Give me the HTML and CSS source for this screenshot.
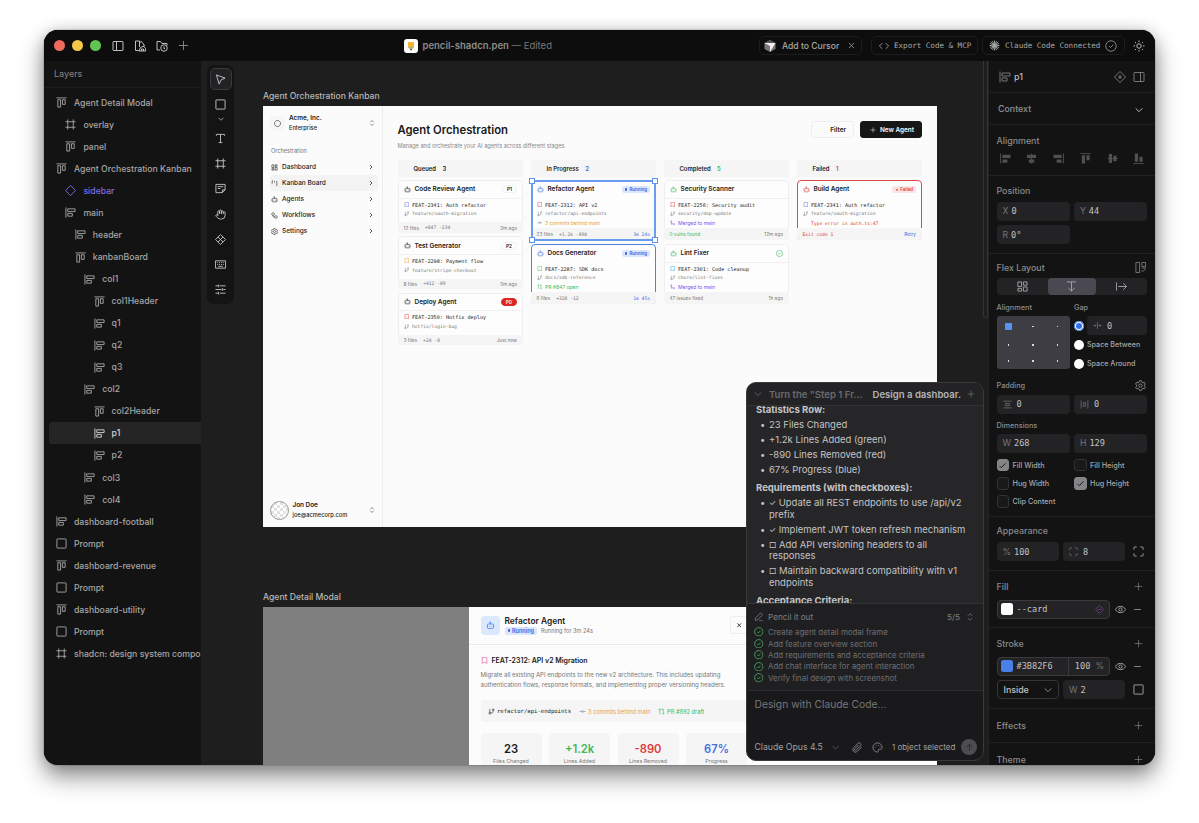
FILE: index.html
```html
<!DOCTYPE html>
<html lang="en">
<head>
  <meta charset="UTF-8" />
  <meta name="viewport" content="width=device-width, initial-scale=1" />
  <title>pencil-shadcn.pen</title>
  <link rel="stylesheet" href="styles.css">
</head>
<body>

  <!-- icon sprite -->
  <svg class="sprite">
    <symbol id="i-col" viewBox="0 0 24 24"><path d="M2 1v22M6 4h16v6H6zM6 14h10v6H6z"/></symbol>
    <symbol id="i-row" viewBox="0 0 24 24"><path d="M1 2h22M4 6h6v16H4zM14 6h6v10h-6z"/></symbol>
    <symbol id="i-frame" viewBox="0 0 24 24"><path d="M1 6h22M1 18h22M6 1v22M18 1v22"/></symbol>
    <symbol id="i-square" viewBox="0 0 24 24"><rect x="2" y="2" width="20" height="20" rx="1"/></symbol>
    <symbol id="i-diamond" viewBox="0 0 24 24"><path d="M12 1l11 11-11 11L1 12z"/></symbol>
    <symbol id="i-left" viewBox="0 0 24 24"><rect x="2" y="3" width="20" height="18" rx="1"/><path d="M9 3v18"/></symbol>
    <symbol id="i-right" viewBox="0 0 24 24"><rect x="2" y="3" width="20" height="18" rx="1"/><path d="M15 3v18"/></symbol>
    <symbol id="i-swatch" viewBox="0 0 24 24"><path d="M10 21H3V2h8v12M11 5l4-2 6 8-3 2M11 21l1-5 7-4 4 5v5H10M15 22v-4h4v4"/></symbol>
    <symbol id="i-folder" viewBox="0 0 24 24"><path d="M8 20H2V3h7l3 4h10v4"/><circle cx="16" cy="16" r="6.500"/><path d="M16 13v4h2"/></symbol>
    <symbol id="i-plus" viewBox="0 0 24 24"><path d="M12 2v20M2 12h20"/></symbol>
    <symbol id="i-minus" viewBox="0 0 24 24"><path d="M3 12h18"/></symbol>
    <symbol id="i-x" viewBox="0 0 24 24"><path d="M5 5l14 14M19 5L5 19"/></symbol>
    <symbol id="i-code" viewBox="0 0 24 24"><path d="M8 5l-7 7 7 7M16 5l7 7-7 7"/></symbol>
    <symbol id="i-burst" viewBox="0 0 24 24"><path d="M12 1v22M1 12h22M4 4l16 16M20 4L4 20M7.500 2l9 20M16.500 2l-9 20M2 7.500l20 9M22 7.500l-20 9"/></symbol>
    <symbol id="i-check" viewBox="0 0 24 24"><circle cx="12" cy="12" r="10.500"/><path d="M8 12l3 3 5.500-5.500"/></symbol>
    <symbol id="i-tick" viewBox="0 0 24 24"><path d="M4 13l5 5L20 6"/></symbol>
    <symbol id="i-sun" viewBox="0 0 24 24"><circle cx="12" cy="12" r="4.500"/><path d="M12 1v3M12 20v3M1 12h3M20 12h3M4 4l2 2M18 18l2 2M4 20l2-2M18 6l2-2"/></symbol>
    <symbol id="i-cursor" viewBox="0 0 24 24"><path d="M3 2l6 20 4-9 9-4z"/></symbol>
    <symbol id="i-down" viewBox="0 0 24 24"><path d="M2 7l10 10L22 7"/></symbol>
    <symbol id="i-next" viewBox="0 0 24 24"><path d="M8 4l8 8-8 8"/></symbol>
    <symbol id="i-updown" viewBox="0 0 24 24"><path d="M5 9l7-7 7 7M5 15l7 7 7-7"/></symbol>
    <symbol id="i-text" viewBox="0 0 24 24"><path d="M3 6V3h18v3M12 3v18M8 21h8"/></symbol>
    <symbol id="i-note" viewBox="0 0 24 24"><path d="M2 3h20v12l-6 6H2zM22 15h-6v6M6 8h12M6 12h6"/></symbol>
    <symbol id="i-hand" viewBox="0 0 24 24"><path d="M18 11V6a2 2 0 0 0-4 0v5M14 10V4a2 2 0 0 0-4 0v6M10 10.500V6a2 2 0 0 0-4 0v8M18 8a2 2 0 0 1 4 0v6a8 8 0 0 1-8 8h-2c-3 0-4.500-1-6-2.500L2.500 16a2 2 0 0 1 3-3L7 15"/></symbol>
    <symbol id="i-comp" viewBox="0 0 24 24"><path d="M12 1l11 11-11 11L1 12zM6.500 6.500l11 11M17.500 6.500l-11 11"/></symbol>
    <symbol id="i-dplus" viewBox="0 0 24 24"><path d="M12 1l11 11-11 11L1 12zM12 8v8M8 12h8"/></symbol>
    <symbol id="i-dminus" viewBox="0 0 24 24"><path d="M12 1l11 11-11 11L1 12zM7 12h10"/></symbol>
    <symbol id="i-keys" viewBox="0 0 24 24"><path d="M1 4h22v16H1zM5 8h2M9 8h2M13 8h2M17 8h2M5 12h2M9 12h2M13 12h2M17 12h2M7 16h10"/></symbol>
    <symbol id="i-sliders" viewBox="0 0 24 24"><path d="M1 4h6M11 4h12M8 1v6M1 12h13M18 12h5M16 9v6M1 20h6M11 20h12M8 17v6"/></symbol>
    <symbol id="i-dash" viewBox="0 0 24 24"><path d="M3 3h7v9H3zM14 3h7v5h-7zM14 12h7v9h-7zM3 16h7v5H3z"/></symbol>
    <symbol id="i-grid" viewBox="0 0 24 24"><path d="M2 2h8v10H2zM14 2h8v7h-8zM14 13h8v9h-8zM2 16h8v6H2z"/></symbol>
    <symbol id="i-kanban" viewBox="0 0 24 24"><path d="M4 3v10M12 3v6M20 3v18M4 3h3"/></symbol>
    <symbol id="i-bot" viewBox="0 0 24 24"><path d="M12 8V3H8M2 14h2M20 14h2M15 13v2M9 13v2"/><rect x="4" y="8" width="16" height="12" rx="2"/></symbol>
    <symbol id="i-flow" viewBox="0 0 24 24"><rect x="3" y="3" width="8" height="8" rx="2"/><path d="M7 11v4a2 2 0 0 0 2 2h4"/><rect x="13" y="13" width="8" height="8" rx="2"/></symbol>
    <symbol id="i-gear" viewBox="0 0 24 24"><path d="M10 1.500h4l1 3 2.500 1.500 3.200-.7 2 3.500L20.500 11v2.500l2.200 2-2 3.500-3.200-.7L15 20l-1 2.800h-4L9 20l-2.500-1.500-3.200.7-2-3.500 2.200-2V11L1.300 8.800l2-3.500 3.200.7L9 4.500z"/><circle cx="12" cy="12.200" r="3.600"/></symbol>
    <symbol id="i-branch" viewBox="0 0 24 24"><path d="M6 3v13M18 9a9 9 0 0 1-9 9"/><circle cx="18" cy="6" r="3"/><circle cx="6" cy="18" r="3"/></symbol>
    <symbol id="i-mark" viewBox="0 0 24 24"><path d="M20 22l-8-5-8 5V2h16z"/></symbol>
    <symbol id="i-commit" viewBox="0 0 24 24"><circle cx="12" cy="12" r="3"/><path d="M2 12h7M15 12h7"/></symbol>
    <symbol id="i-pr" viewBox="0 0 24 24"><circle cx="18" cy="19" r="2.500"/><circle cx="6" cy="5" r="2.500"/><path d="M6 8v14M18 16V5h-5l3-3M13 5l3 3"/></symbol>
    <symbol id="i-merge" viewBox="0 0 24 24"><circle cx="18" cy="18" r="3"/><circle cx="6" cy="6" r="3"/><path d="M6 21V9a9 9 0 0 0 9 9"/></symbol>
    <symbol id="i-hex" viewBox="0 0 24 24"><path d="M8 2h8l6 6v8l-6 6H8l-6-6V8z"/></symbol>
    <symbol id="i-pencil" viewBox="0 0 24 24"><path d="M3 21l1-6L17 2l5 5L9 20zM13 22h9"/></symbol>
    <symbol id="i-clip" viewBox="0 0 24 24"><path d="M21 11l-9.500 9.500a5.500 5.500 0 0 1-8-8L13 3a3.700 3.700 0 0 1 5.500 5.500L9 18a2 2 0 0 1-3-3l8.500-8.500"/></symbol>
    <symbol id="i-palette" viewBox="0 0 24 24"><path d="M12 2a10 10 0 1 0 0 20c2 0 2.500-1.500 1.700-2.700-1-1.700 0-3.300 2-3.300H19c2 0 3-1.500 3-4 0-5.500-4.500-10-10-10z"/><path d="M6 12h1.500M8.500 7.500H10M14 7.500h1.500M17 11h1.500"/></symbol>
    <symbol id="i-up" viewBox="0 0 24 24"><path d="M12 21V3M4 11l8-8 8 8"/></symbol>
    <symbol id="i-eye" viewBox="0 0 24 24"><path d="M1 12c4-9 18-9 22 0-4 9-18 9-22 0z"/><circle cx="12" cy="12" r="3.500"/></symbol>
    <symbol id="i-corners" viewBox="0 0 24 24"><path d="M2 8V4a2 2 0 0 1 2-2h4M16 2h4a2 2 0 0 1 2 2v4M22 16v4a2 2 0 0 1-2 2h-4M8 22H4a2 2 0 0 1-2-2v-4"/></symbol>
    <symbol id="i-fromtop" viewBox="0 0 24 24"><path d="M2 2h20M12 2v20M5 15l7 7 7-7"/></symbol>
    <symbol id="i-fromleft" viewBox="0 0 24 24"><path d="M1 3v18M5 12h18M16 5l7 7-7 7"/></symbol>
    <symbol id="i-gap" viewBox="0 0 24 24"><path d="M12 3v18M1 12h7M16 12h7M5 9l3 3-3 3M19 9l-3 3 3 3"/></symbol>
    <symbol id="i-padv" viewBox="0 0 24 24"><path d="M1 3h22M1 21h22M7 9h10v6H7z"/></symbol>
    <symbol id="i-padh" viewBox="0 0 24 24"><path d="M3 1v22M21 1v22M9 7h6v10H9z"/></symbol>
    <symbol id="i-layout" viewBox="0 0 24 24"><path d="M2 1h8v22H2zM15 1h8v9h-8zM14 18l3 3 6-6v-2h-8"/></symbol>
    <symbol id="a-left" viewBox="0 0 24 24"><path d="M1 1v22"/><path class="solid" d="M5 4h18v7H5zM5 14h11v7H5z"/></symbol>
    <symbol id="a-center" viewBox="0 0 24 24"><path d="M12 1v22"/><path class="solid" d="M2 4h20v7H2zM6 14h12v7H6z"/></symbol>
    <symbol id="a-right" viewBox="0 0 24 24"><path d="M23 1v22"/><path class="solid" d="M1 4h18v7H1zM8 14h11v7H8z"/></symbol>
    <symbol id="a-top" viewBox="0 0 24 24"><path d="M1 1h22"/><path class="solid" d="M4 5h7v18H4zM14 5h7v11h-7z"/></symbol>
    <symbol id="a-middle" viewBox="0 0 24 24"><path d="M1 12h22"/><path class="solid" d="M4 2h7v20H4zM14 6h7v12h-7z"/></symbol>
    <symbol id="a-bottom" viewBox="0 0 24 24"><path d="M1 23h22"/><path class="solid" d="M4 1h7v18H4zM14 8h7v11h-7z"/></symbol>
  </svg>

  <div class="window">

    <header class="titlebar">
      <div class="tb-left">
        <span class="light red"></span>
        <span class="light yellow"></span>
        <span class="light green"></span>
        <svg class="icon"><use href="#i-left"/></svg>
        <svg class="icon"><use href="#i-swatch"/></svg>
        <svg class="icon"><use href="#i-folder"/></svg>
        <svg class="icon"><use href="#i-plus"/></svg>
      </div>
      <div class="tb-title">
        <svg class="app-icon" viewBox="0 0 14 14"><rect width="14" height="14" rx="3" fill="#fff"/><path d="M4 3h6v5l-3 3.500L4 8z" fill="#f2b632"/><path d="M4 8h6l-3 3.500z" fill="#b9a98c"/><path d="M6 10.300h2l-1 1.200z" fill="#222"/></svg>
        <span><b>pencil-shadcn.pen</b> — Edited</span>
      </div>
      <div class="tb-right">
        <div class="chip cursor-chip">
          <svg class="cube" viewBox="0 0 12 13"><path d="M6 0l6 3.200v6.600L6 13 0 9.800V3.200z" fill="#777"/><path d="M0 3.200h12L6 13V6.500z" fill="#eee"/><path d="M0 3.200L6 0l6 3.200z" fill="#555"/></svg>
          <span>Add to Cursor</span>
          <svg class="icon"><use href="#i-x"/></svg>
        </div>
        <div class="chip mono export-chip">
          <svg class="icon"><use href="#i-code"/></svg>
          <span>Export Code &amp; MCP</span>
        </div>
        <div class="chip mono claude-chip">
          <svg class="icon"><use href="#i-burst"/></svg>
          <span>Claude Code Connected</span>
          <svg class="icon"><use href="#i-check"/></svg>
        </div>
        <svg class="icon sun"><use href="#i-sun"/></svg>
      </div>
    </header>

    <div class="workspace">

      <aside class="layers">
        <div class="layers-head">Layers</div>
        <ul class="tree">
          <li><svg class="icon"><use href="#i-row"/></svg>Agent Detail Modal</li>
          <li class="l1"><svg class="icon"><use href="#i-frame"/></svg>overlay</li>
          <li class="l1"><svg class="icon"><use href="#i-row"/></svg>panel</li>
          <li><svg class="icon"><use href="#i-row"/></svg>Agent Orchestration Kanban</li>
          <li class="l1 component"><svg class="icon"><use href="#i-diamond"/></svg>sidebar</li>
          <li class="l1"><svg class="icon"><use href="#i-col"/></svg>main</li>
          <li class="l2"><svg class="icon"><use href="#i-col"/></svg>header</li>
          <li class="l2"><svg class="icon"><use href="#i-row"/></svg>kanbanBoard</li>
          <li class="l3"><svg class="icon"><use href="#i-col"/></svg>col1</li>
          <li class="l4"><svg class="icon"><use href="#i-row"/></svg>col1Header</li>
          <li class="l4"><svg class="icon"><use href="#i-col"/></svg>q1</li>
          <li class="l4"><svg class="icon"><use href="#i-col"/></svg>q2</li>
          <li class="l4"><svg class="icon"><use href="#i-col"/></svg>q3</li>
          <li class="l3"><svg class="icon"><use href="#i-col"/></svg>col2</li>
          <li class="l4"><svg class="icon"><use href="#i-row"/></svg>col2Header</li>
          <li class="l4 selected"><svg class="icon"><use href="#i-col"/></svg>p1</li>
          <li class="l4"><svg class="icon"><use href="#i-col"/></svg>p2</li>
          <li class="l3"><svg class="icon"><use href="#i-col"/></svg>col3</li>
          <li class="l3"><svg class="icon"><use href="#i-col"/></svg>col4</li>
          <li><svg class="icon"><use href="#i-col"/></svg>dashboard-football</li>
          <li><svg class="icon"><use href="#i-square"/></svg>Prompt</li>
          <li><svg class="icon"><use href="#i-row"/></svg>dashboard-revenue</li>
          <li><svg class="icon"><use href="#i-square"/></svg>Prompt</li>
          <li><svg class="icon"><use href="#i-row"/></svg>dashboard-utility</li>
          <li><svg class="icon"><use href="#i-square"/></svg>Prompt</li>
          <li><svg class="icon"><use href="#i-frame"/></svg>shadcn: design system compo</li>
        </ul>
      </aside>

      <main class="canvas">

        <div class="tools">
          <span class="tool active"><svg class="icon"><use href="#i-cursor"/></svg></span>
          <span class="tool"><svg class="icon"><use href="#i-square"/></svg></span>
          <span class="tool more"><svg class="icon"><use href="#i-down"/></svg></span>
          <span class="tool"><svg class="icon"><use href="#i-text"/></svg></span>
          <span class="tool"><svg class="icon"><use href="#i-frame"/></svg></span>
          <span class="tool"><svg class="icon"><use href="#i-note"/></svg></span>
          <span class="tool"><svg class="icon"><use href="#i-hand"/></svg></span>
          <span class="tool"><svg class="icon"><use href="#i-comp"/></svg></span>
          <span class="tool"><svg class="icon"><use href="#i-keys"/></svg></span>
          <span class="tool"><svg class="icon"><use href="#i-sliders"/></svg></span>
        </div>

        <!-- kanban artboard -->
        <div class="board-wrap kanban-pos">
          <div class="board-name">Agent Orchestration Kanban</div>
          <div class="artboard kanban">
            <div class="app-side">
              <div class="team">
                <span class="team-logo"><svg class="icon"><use href="#i-hex"/></svg></span>
                <span class="who"><b>Acme, Inc.</b><small>Enterprise</small></span>
                <svg class="icon ud"><use href="#i-updown"/></svg>
              </div>
              <div class="nav-title">Orchestration</div>
              <div class="nav">
                <div><svg class="icon"><use href="#i-dash"/></svg>Dashboard<svg class="icon go"><use href="#i-next"/></svg></div>
                <div class="on"><svg class="icon"><use href="#i-kanban"/></svg>Kanban Board<svg class="icon go"><use href="#i-next"/></svg></div>
                <div><svg class="icon"><use href="#i-bot"/></svg>Agents<svg class="icon go"><use href="#i-next"/></svg></div>
                <div><svg class="icon"><use href="#i-flow"/></svg>Workflows<svg class="icon go"><use href="#i-next"/></svg></div>
                <div><svg class="icon"><use href="#i-gear"/></svg>Settings<svg class="icon go"><use href="#i-next"/></svg></div>
              </div>
              <div class="team user">
                <span class="avatar"></span>
                <span class="who"><b>Jon Doe</b><small>joe@acmecorp.com</small></span>
                <svg class="icon ud"><use href="#i-updown"/></svg>
              </div>
            </div>
            <div class="app-main">
              <div class="app-head">
                <div>
                  <h1>Agent Orchestration</h1>
                  <p>Manage and orchestrate your AI agents across different stages</p>
                </div>
                <span class="btn">Filter</span>
                <span class="btn dark"><svg class="icon"><use href="#i-plus"/></svg>New Agent</span>
              </div>
              <div class="columns">

                <div class="column">
                  <div class="col-head">Queued <span>3</span></div>
                  <div class="card">
                    <div class="card-head"><svg class="icon"><use href="#i-bot"/></svg>Code Review Agent<span class="tag">P1</span></div>
                    <div class="card-body">
                      <div class="feat"><svg class="icon indigo"><use href="#i-mark"/></svg>FEAT-2341: Auth refactor</div>
                      <div class="br"><svg class="icon"><use href="#i-branch"/></svg>feature/oauth-migration</div>
                    </div>
                    <div class="card-foot">12 files<i>+847 -234</i><span>2m ago</span></div>
                  </div>
                  <div class="card">
                    <div class="card-head"><svg class="icon"><use href="#i-bot"/></svg>Test Generator<span class="tag">P2</span></div>
                    <div class="card-body">
                      <div class="feat"><svg class="icon orange"><use href="#i-mark"/></svg>FEAT-2298: Payment flow</div>
                      <div class="br"><svg class="icon"><use href="#i-branch"/></svg>feature/stripe-checkout</div>
                    </div>
                    <div class="card-foot">8 files<i>+412 -89</i><span>5m ago</span></div>
                  </div>
                  <div class="card">
                    <div class="card-head"><svg class="icon"><use href="#i-bot"/></svg>Deploy Agent<span class="tag p0">P0</span></div>
                    <div class="card-body">
                      <div class="feat"><svg class="icon red-c"><use href="#i-mark"/></svg>FEAT-2350: Hotfix deploy</div>
                      <div class="br"><svg class="icon"><use href="#i-branch"/></svg>hotfix/login-bug</div>
                    </div>
                    <div class="card-foot">3 files<i>+24 -8</i><span>Just now</span></div>
                  </div>
                </div>

                <div class="column">
                  <div class="col-head">In Progress <span class="blue-c">2</span></div>
                  <div class="card tall running">
                    <div class="card-head"><svg class="icon blue-c"><use href="#i-bot"/></svg>Refactor Agent<span class="status">Running</span></div>
                    <div class="card-body">
                      <div class="feat"><svg class="icon red-c"><use href="#i-mark"/></svg>FEAT-2312: API v2</div>
                      <div class="br"><svg class="icon"><use href="#i-branch"/></svg>refactor/api-endpoints</div>
                      <div class="note orange"><svg class="icon grey-c"><use href="#i-commit"/></svg>3 commits behind main</div>
                    </div>
                    <div class="card-foot">23 files<i>+1.2k -890</i><span class="mono blue-c">3m 24s</span></div>
                    <div class="selection"><i></i><i></i><i></i><i></i></div>
                  </div>
                  <div class="card tall running">
                    <div class="card-head"><svg class="icon blue-c"><use href="#i-bot"/></svg>Docs Generator<span class="status">Running</span></div>
                    <div class="card-body">
                      <div class="feat"><svg class="icon green-c"><use href="#i-mark"/></svg>FEAT-2287: SDK docs</div>
                      <div class="br"><svg class="icon"><use href="#i-branch"/></svg>docs/sdk-reference</div>
                      <div class="note green-c"><svg class="icon"><use href="#i-pr"/></svg>PR #847 open</div>
                    </div>
                    <div class="card-foot">6 files<i>+328 -12</i><span class="mono blue-c">1m 45s</span></div>
                  </div>
                </div>

                <div class="column">
                  <div class="col-head">Completed <span class="green-c">5</span></div>
                  <div class="card tall">
                    <div class="card-head"><svg class="icon green-c"><use href="#i-bot"/></svg>Security Scanner</div>
                    <div class="card-body">
                      <div class="feat"><svg class="icon red-c"><use href="#i-mark"/></svg>FEAT-2256: Security audit</div>
                      <div class="br"><svg class="icon"><use href="#i-branch"/></svg>security/dep-update</div>
                      <div class="note violet"><svg class="icon"><use href="#i-merge"/></svg>Merged to main</div>
                    </div>
                    <div class="card-foot"><em class="green-c">0 vulns found</em><span>12m ago</span></div>
                  </div>
                  <div class="card tall">
                    <div class="card-head"><svg class="icon green-c"><use href="#i-bot"/></svg>Lint Fixer<svg class="icon done green-c"><use href="#i-check"/></svg></div>
                    <div class="card-body">
                      <div class="feat"><svg class="icon cyan"><use href="#i-mark"/></svg>FEAT-2301: Code cleanup</div>
                      <div class="br"><svg class="icon"><use href="#i-branch"/></svg>chore/lint-fixes</div>
                      <div class="note violet"><svg class="icon"><use href="#i-merge"/></svg>Merged to main</div>
                    </div>
                    <div class="card-foot">47 issues fixed<span>1h ago</span></div>
                  </div>
                </div>

                <div class="column">
                  <div class="col-head">Failed <span class="red-c">1</span></div>
                  <div class="card tall failed">
                    <div class="card-head"><svg class="icon red-c"><use href="#i-bot"/></svg>Build Agent<span class="status bad">Failed</span></div>
                    <div class="card-body">
                      <div class="feat"><svg class="icon indigo"><use href="#i-mark"/></svg>FEAT-2341: Auth refactor</div>
                      <div class="br"><svg class="icon"><use href="#i-branch"/></svg>feature/oauth-migration</div>
                      <div class="br err">Type error in auth.ts:47</div>
                    </div>
                    <div class="card-foot"><em class="mono red-c">Exit code 1</em><span class="blue-c">Retry</span></div>
                  </div>
                </div>

              </div>
            </div>
          </div>
        </div>

        <!-- modal artboard -->
        <div class="board-wrap modal-pos">
          <div class="board-name">Agent Detail Modal</div>
          <div class="artboard modal">
            <div class="sheet">
              <div class="sheet-head">
                <span class="bot-box"><svg class="icon"><use href="#i-bot"/></svg></span>
                <div>
                  <h2>Refactor Agent</h2>
                  <div class="run"><span class="status">Running</span>Running for 3m 24s</div>
                </div>
                <span class="close"><svg class="icon"><use href="#i-x"/></svg></span>
              </div>
              <div class="sheet-body">
                <h3><svg class="icon"><use href="#i-mark"/></svg>FEAT-2312: API v2 Migration</h3>
                <p>Migrate all existing API endpoints to the new v2 architecture. This includes updating<br>authentication flows, response formats, and implementing proper versioning headers.</p>
                <div class="branch-bar">
                  <svg class="icon"><use href="#i-branch"/></svg><code>refactor/api-endpoints</code>
                  <svg class="icon grey-c"><use href="#i-commit"/></svg><span class="orange behind">3 commits behind main</span>
                  <svg class="icon green-c"><use href="#i-pr"/></svg><span class="green-c">PR #892 draft</span>
                </div>
                <div class="stats">
                  <div><b>23</b>Files Changed</div>
                  <div><b class="green-c">+1.2k</b>Lines Added</div>
                  <div><b class="red-c">-890</b>Lines Removed</div>
                  <div><b class="blue-c">67%</b>Progress</div>
                </div>
              </div>
            </div>
          </div>
        </div>

        <!-- chat -->
        <div class="chat">
          <div class="chat-tabs">
            <svg class="icon"><use href="#i-down"/></svg>
            <span>Turn the "Step 1 Fr...</span>
            <b>Design a dashboar.</b>
            <svg class="icon"><use href="#i-plus"/></svg>
          </div>
          <div class="chat-log">
            <h4>Statistics Row:</h4>
            <ul>
              <li>23 Files Changed</li>
              <li>+1.2k Lines Added (green)</li>
              <li>-890 Lines Removed (red)</li>
              <li>67% Progress (blue)</li>
            </ul>
            <h4>Requirements (with checkboxes):</h4>
            <ul>
              <li><i>✓</i> Update all REST endpoints to use /api/v2<br>prefix</li>
              <li><i>✓</i> Implement JWT token refresh mechanism</li>
              <li><i>□</i> Add API versioning headers to all<br>responses</li>
              <li><i>□</i> Maintain backward compatibility with v1<br>endpoints</li>
            </ul>
            <h4>Acceptance Criteria:</h4>
          </div>
          <div class="todo">
            <div class="todo-head"><svg class="icon"><use href="#i-pencil"/></svg>Pencil it out<span>5/5</span><svg class="icon"><use href="#i-updown"/></svg></div>
            <div class="todo-item"><svg class="icon"><use href="#i-check"/></svg>Create agent detail modal frame</div>
            <div class="todo-item"><svg class="icon"><use href="#i-check"/></svg>Add feature overview section</div>
            <div class="todo-item"><svg class="icon"><use href="#i-check"/></svg>Add requirements and acceptance criteria</div>
            <div class="todo-item"><svg class="icon"><use href="#i-check"/></svg>Add chat interface for agent interaction</div>
            <div class="todo-item"><svg class="icon"><use href="#i-check"/></svg>Verify final design with screenshot</div>
          </div>
          <div class="prompt">
            <div class="placeholder">Design with Claude Code...</div>
            <div class="prompt-bar">
              <span class="model">Claude Opus 4.5</span>
              <svg class="icon caret"><use href="#i-down"/></svg>
              <svg class="icon"><use href="#i-clip"/></svg>
              <svg class="icon"><use href="#i-palette"/></svg>
              <span class="count">1 object selected</span>
              <span class="send"><svg class="icon"><use href="#i-up"/></svg></span>
            </div>
          </div>
        </div>

        <div class="scrollbar"></div>
      </main>

      <aside class="props">
        <section class="s-name">
          <svg class="icon"><use href="#i-col"/></svg><b>p1</b>
          <svg class="icon push"><use href="#i-dplus"/></svg>
          <svg class="icon"><use href="#i-right"/></svg>
        </section>
        <section class="s-context">
          <span>Context</span><svg class="icon push"><use href="#i-down"/></svg>
        </section>
        <section class="s-align">
          <h5>Alignment</h5>
          <div class="align-row">
            <svg class="icon"><use href="#a-left"/></svg>
            <svg class="icon"><use href="#a-center"/></svg>
            <svg class="icon"><use href="#a-right"/></svg>
            <svg class="icon"><use href="#a-top"/></svg>
            <svg class="icon"><use href="#a-middle"/></svg>
            <svg class="icon"><use href="#a-bottom"/></svg>
          </div>
        </section>
        <section class="s-position">
          <h5>Position</h5>
          <div class="pair">
            <div class="field"><i>X</i>0</div>
            <div class="field"><i>Y</i>44</div>
            <div class="field"><i>R</i>0°</div>
          </div>
        </section>
        <section class="s-flex">
          <h5>Flex Layout <svg class="icon push"><use href="#i-layout"/></svg></h5>
          <div class="segments">
            <span><svg class="icon"><use href="#i-grid"/></svg></span>
            <span class="on"><svg class="icon"><use href="#i-fromtop"/></svg></span>
            <span><svg class="icon"><use href="#i-fromleft"/></svg></span>
          </div>
          <div class="pair labels"><h6>Alignment</h6><h6>Gap</h6></div>
          <div class="pair">
            <div class="nine"><i class="on"></i><i></i><i></i><i></i><i></i><i></i><i></i><i></i><i></i></div>
            <div class="gaps">
              <div><span class="radio on"></span><span class="field"><svg class="icon"><use href="#i-gap"/></svg>0</span></div>
              <div><span class="radio"></span>Space Between</div>
              <div><span class="radio"></span>Space Around</div>
            </div>
          </div>
          <h6 class="padding-label">Padding <svg class="icon push"><use href="#i-gear"/></svg></h6>
          <div class="pair">
            <div class="field"><svg class="icon"><use href="#i-padv"/></svg>0</div>
            <div class="field"><svg class="icon"><use href="#i-padh"/></svg>0</div>
          </div>
          <h6 class="dim-label">Dimensions</h6>
          <div class="pair">
            <div class="field"><i>W</i>268</div>
            <div class="field"><i>H</i>129</div>
          </div>
          <div class="pair checks">
            <div><span class="box on"><svg class="icon"><use href="#i-tick"/></svg></span>Fill Width</div>
            <div><span class="box"></span>Fill Height</div>
            <div><span class="box"></span>Hug Width</div>
            <div><span class="box on"><svg class="icon"><use href="#i-tick"/></svg></span>Hug Height</div>
            <div><span class="box"></span>Clip Content</div>
          </div>
        </section>
        <section class="s-appearance">
          <h5>Appearance</h5>
          <div class="line">
            <div class="field w62"><i>%</i>100</div>
            <div class="field w62"><svg class="icon"><use href="#i-corners"/></svg>8</div>
            <svg class="icon end"><use href="#i-corners"/></svg>
          </div>
        </section>
        <section class="s-fill">
          <h5>Fill <svg class="icon push"><use href="#i-plus"/></svg></h5>
          <div class="line">
            <div class="field paint"><span class="swatch"></span>--card<svg class="icon var"><use href="#i-dminus"/></svg></div>
            <svg class="icon eye"><use href="#i-eye"/></svg>
            <svg class="icon minus"><use href="#i-minus"/></svg>
          </div>
        </section>
        <section class="s-stroke">
          <h5>Stroke <svg class="icon push"><use href="#i-plus"/></svg></h5>
          <div class="line">
            <div class="field paint"><span class="swatch blue"></span>#3B82F6<span class="opacity">100 <i>%</i></span></div>
            <svg class="icon eye"><use href="#i-eye"/></svg>
            <svg class="icon minus"><use href="#i-minus"/></svg>
          </div>
          <div class="line">
            <div class="select">Inside<svg class="icon"><use href="#i-down"/></svg></div>
            <div class="field w62"><i>W</i>2</div>
            <svg class="icon end"><use href="#i-square"/></svg>
          </div>
        </section>
        <section class="s-effects">
          <h5>Effects <svg class="icon push"><use href="#i-plus"/></svg></h5>
        </section>
        <section class="s-theme">
          <h5>Theme <svg class="icon push"><use href="#i-plus"/></svg></h5>
        </section>
      </aside>

    </div>
  </div>

</body>
</html>
```
FILE: styles.css
```css
* {
  box-sizing: border-box;
}
body {
  margin: 0;
  width: 1199px;
  height: 823px;
  padding: 30px 44px;
  overflow: hidden;
  background: #fff;
  font-family: Inter, "Liberation Sans", sans-serif;
  font-size: 9px;
  color: #a9a9a9;
}
h1, h2, h3, h4, h5, h6, p, ul {
  margin: 0;
  padding: 0;
}
ul {
  list-style: none;
}
i, em {
  font-style: normal;
}
.sprite {
  position: absolute;
  width: 0;
  height: 0;
}
.icon {
  width: 11px;
  height: 11px;
  flex: none;
  fill: none;
  stroke: currentColor;
  stroke-width: 2;
  stroke-linejoin: round;
}
.solid {
  fill: currentColor;
  stroke: none;
}
.mono, code {
  font-family: "DejaVu Sans Mono", monospace;
}
.push {
  margin-left: auto;
}
.green-c { color: #3fb95f; }
.red-c { color: #dc3c3c; }
.blue-c { color: #4470e0; }
.orange { color: #eba133; }
.violet { color: #7c4ff0; }
.indigo { color: #6366f1; }
.cyan { color: #2fa8d8; }
.grey-c { color: #777; }

/* window */
.window {
  width: 1111px;
  height: 735px;
  border-radius: 14px;
  overflow: hidden;
  background: #131313;
  display: flex;
  flex-direction: column;
  box-shadow: 0 0 1px #000, 0 12px 24px rgba(0, 0, 0, .42), 0 2px 16px rgba(0, 0, 0, .2);
}
.titlebar {
  height: 31px;
  flex: none;
  display: flex;
  align-items: center;
  background: #0d0d0d;
}
.tb-left {
  display: flex;
  align-items: center;
  width: 360px;
  padding-left: 9.500px;
}
.tb-left .icon {
  width: 12px;
  height: 12px;
  margin-right: 10px;
  color: #c9c9c9;
  stroke-width: 1.900;
}
.tb-left .icon:last-child {
  width: 11px;
  height: 11px;
  color: #8f8f8f;
}
.light {
  width: 11px;
  height: 11px;
  border-radius: 50%;
  margin-right: 7px;
}
.light.green {
  margin-right: 11px;
}
.light.red { background: #ee6a5f; }
.light.yellow { background: #f5c84b; }
.light.green { background: #62c454; }
.tb-title {
  display: flex;
  align-items: center;
  gap: 4.500px;
  width: 355px;
  font-size: 9.500px;
  color: #777;
}
.tb-title b {
  font-weight: 600;
  color: #8c8c8c;
}
.app-icon {
  width: 14px;
  height: 14px;
}
.tb-right {
  display: flex;
  align-items: center;
}
.chip {
  display: flex;
  align-items: center;
  height: 19px;
  padding: 0 5px;
  border: 1px solid #1d1d1d;
  border-radius: 5px;
  color: #a8a8a8;
}
.chip.mono {
  font-size: 7.550px;
}
.cursor-chip {
  width: 103px;
  margin-right: 9px;
  padding-left: 4px;
  font-size: 8.600px;
  font-weight: 500;
}
.cursor-chip .cube {
  width: 12px;
  height: 12px;
  margin-right: 6px;
}
.cursor-chip .icon {
  width: 9px;
  height: 9px;
  margin-left: auto;
}
.export-chip {
  width: 107px;
  margin-right: 4px;
  padding-left: 7px;
}
.export-chip .icon {
  width: 10px;
  height: 10px;
  margin-right: 5px;
}
.claude-chip {
  width: 143px;
  padding-left: 6px;
}
.claude-chip .icon:first-child {
  margin-right: 5px;
  stroke-width: 1.900;
}
.claude-chip .icon:last-child {
  width: 12px;
  height: 12px;
  margin-left: 5px;
  stroke-width: 1.500;
}
.sun {
  width: 12px;
  height: 12px;
  margin-left: 8px;
  color: #b5b5b5;
}
.workspace {
  flex: 1;
  display: flex;
  min-height: 0;
}

/* layers */
.layers {
  width: 157px;
  flex: none;
  background: #131313;
  overflow: hidden;
}
.layers-head {
  height: 27px;
  padding-left: 10px;
  line-height: 26px;
  border-bottom: 1px solid #1d1d1d;
  color: #858585;
}
.tree {
  padding: 3.700px 0 0 5px;
}
.tree li {
  display: flex;
  align-items: center;
  gap: 7px;
  height: 22.060px;
  padding-left: 7px;
  border-radius: 3px 0 0 3px;
  white-space: nowrap;
  font-size: 8.700px;
  font-weight: 500;
  color: #a6a6a6;
}
.tree .l1 { padding-left: 16.400px; }
.tree .l2 { padding-left: 25.800px; }
.tree .l3 { padding-left: 35.200px; }
.tree .l4 { padding-left: 44.600px; }
.tree .component {
  color: #7c6be6;
}
.tree .selected {
  background: #252525;
  color: #d5d5d5;
}

/* canvas */
.canvas {
  position: relative;
  flex: 1;
  overflow: hidden;
  background: #1e1e1e;
}
.tools {
  position: absolute;
  left: 6px;
  top: 4px;
  width: 27px;
  height: 239px;
  padding: 3px 0;
  border-radius: 7px;
  background: #141414;
  display: flex;
  flex-direction: column;
  align-items: center;
  gap: 3.200px;
  color: #c4c4c4;
}
.tool {
  width: 22px;
  height: 22px;
  flex: none;
  display: flex;
  align-items: center;
  justify-content: center;
}
.tool.active {
  border: 1px solid #3a3a3e;
  border-radius: 5px;
  background: #222224;
}
.tool.more {
  height: 7px;
  margin: -3px 0 2px;
}
.tool.more .icon {
  width: 6px;
  height: 6px;
  stroke-width: 3;
}
.scrollbar {
  position: absolute;
  top: 0;
  right: 0;
  width: 5px;
  height: 257px;
  border: 1px solid #343434;
  border-top: 0;
  border-radius: 0 0 3px 3px;
}
.board-wrap {
  position: absolute;
  left: 62px;
}
.kanban-pos { top: 28px; }
.modal-pos { top: 528.500px; }
.board-name {
  height: 17px;
  line-height: 14px;
  font-size: 8.600px;
  font-weight: 500;
  color: #b8b8b8;
}
.artboard {
  width: 674px;
  display: flex;
}

/* kanban screen */
.kanban {
  height: 421px;
  background: #fbfbfb;
  color: #222;
}
.app-side {
  width: 120px;
  border-right: 1px solid #eee;
  display: flex;
  flex-direction: column;
  padding: 9px 4px 0 7px;
}
.team {
  display: flex;
  align-items: center;
  height: 16px;
  padding-right: 3px;
}
.team-logo {
  width: 15px;
  height: 15px;
  margin-right: 4px;
  border-radius: 4px;
  background: #f6f6f6;
  display: flex;
  align-items: center;
  justify-content: center;
}
.team-logo .icon {
  width: 7px;
  height: 7px;
}
.who {
  display: flex;
  flex-direction: column;
  line-height: 9px;
  font-size: 6.400px;
}
.who b {
  font-weight: 600;
}
.who small {
  font-size: 5.700px;
  font-weight: 500;
}
.ud {
  width: 6px;
  height: 6px;
  margin-left: auto;
}
.nav-title {
  margin: 16px 0 4px 1px;
  font-size: 5.600px;
  line-height: 8px;
  color: #777;
}
.nav div {
  display: flex;
  align-items: center;
  height: 16px;
  padding: 0 4px 0 1px;
  border-radius: 3px;
  font-size: 6.500px;
  font-weight: 500;
}
.nav .on {
  background: #f3f3f3;
}
.nav .icon {
  width: 7px;
  height: 7px;
  margin-right: 4px;
}
.nav .go {
  width: 6px;
  height: 6px;
  margin: 0 0 0 auto;
  stroke-width: 3;
}
.user {
  margin: auto 0 7px;
  height: 20px;
}
.avatar {
  width: 19px;
  height: 19px;
  margin-right: 3.500px;
  border: 1px solid #999;
  border-radius: 50%;
  background: repeating-conic-gradient(#e2e2e2 0 25%, #fff 0 50%) 0 0 / 6px 6px;
}
.app-main {
  flex: 1;
  padding: 15px 15px 0 14.500px;
}
.app-head {
  display: flex;
  align-items: flex-start;
  height: 38.500px;
}
.app-head > div {
  margin-right: auto;
}
.app-head h1 {
  padding-top: 1px;
  font-size: 11.300px;
  line-height: 17px;
  font-weight: 600;
  color: #1a1a1a;
}
.app-head p {
  margin-top: 3px;
  font-size: 5.620px;
  line-height: 9px;
  color: #8a8a8a;
}
.btn {
  display: flex;
  align-items: center;
  justify-content: flex-end;
  width: 43px;
  height: 17px;
  padding: 0 7px;
  border: 1px solid #eee;
  border-radius: 3px;
  font-size: 6.400px;
  font-weight: 600;
}
.btn.dark {
  width: 62px;
  margin-left: 6px;
  background: #171717;
  border-color: #171717;
  color: #fafafa;
}
.btn .icon {
  width: 6px;
  height: 6px;
  margin-right: 4px;
}
.columns {
  display: flex;
  gap: 7.500px;
}
.column {
  width: 125.500px;
  display: flex;
  flex-direction: column;
  gap: 3.700px;
}
.col-head {
  height: 17px;
  padding-left: 16px;
  line-height: 17px;
  background: #f5f5f5;
  font-size: 5.900px;
  font-weight: 600;
}
.col-head span {
  margin-left: 5px;
}
.card {
  position: relative;
  height: 52.600px;
  border: 1px solid #efefef;
  border-radius: 4px;
  background: #fdfdfd;
  display: flex;
  flex-direction: column;
}
.card.tall {
  height: 60.300px;
}
.card-head {
  display: flex;
  align-items: center;
  height: 17.400px;
  padding: 0 5px;
  border-bottom: 1px solid #f0f0f0;
  font-size: 6.450px;
  font-weight: 600;
}
.card-head .icon {
  width: 7px;
  height: 7px;
  margin-right: 4px;
}
.card-head .done {
  margin: 0 0 0 auto;
}
.tag {
  margin-left: auto;
  padding: 0 4px;
  border: 1px solid #f0f0f0;
  border-radius: 4px;
  font-size: 4.800px;
  line-height: 6px;
}
.tag.p0 {
  background: #dc2626;
  border-color: #dc2626;
  color: #fff;
}
.status {
  display: flex;
  align-items: center;
  margin-left: auto;
  height: 7px;
  padding: 0 3px;
  border-radius: 2px;
  background: #dbe6fd;
  color: #3763e0;
  font-size: 4.400px;
  font-weight: 600;
}
.status::before {
  content: "";
  width: 2.500px;
  height: 2.500px;
  margin-right: 2px;
  border-radius: 50%;
  background: currentColor;
}
.status.bad {
  background: #fde4e4;
  color: #dc3c3c;
}
.status.bad::before {
  content: "×";
  width: auto;
  height: auto;
  background: none;
}
.card-body {
  padding: 1.300px 5px 0;
  flex: 1;
}
.card-body div {
  display: flex;
  align-items: center;
  height: 9.300px;
}
.card-body .icon {
  width: 5.500px;
  height: 5.500px;
  margin-right: 3px;
}
.feat {
  font: 500 5.130px "DejaVu Sans Mono", monospace;
}
.br {
  font: 4.680px "DejaVu Sans Mono", monospace;
  color: #777;
}
.br.err {
  padding-left: 8.500px;
  color: #dc3c3c;
}
.note {
  font-size: 5px;
}
.card-foot {
  display: flex;
  align-items: center;
  height: 10.500px;
  margin: 0 -1px -1px;
  padding: 0 6px;
  background: #f5f5f5;
  border-radius: 0 0 4px 4px;
  font-size: 4.750px;
  color: #777;
}
.tall .card-foot {
  height: 12px;
}
.card-foot i {
  margin-left: 6px;
  font: 4.680px "DejaVu Sans Mono", monospace;
}
.card-foot span {
  margin-left: auto;
}
.card-foot .mono {
  font-size: 4.680px;
}
.running {
  border-color: #4b82ea;
}
.failed {
  border-color: #dc4a4a;
}
.running .card-head, .failed .card-head {
  border-bottom-color: transparent;
}
.selection {
  position: absolute;
  inset: -1px -1px -2px;
  border: 2px solid #6a9df2;
}
.selection i {
  position: absolute;
  width: 6px;
  height: 6px;
  background: #fff;
  border: 1px solid #5b94ef;
}
.selection i:nth-child(1) { left: -4px; top: -4px; }
.selection i:nth-child(2) { right: -4px; top: -4px; }
.selection i:nth-child(3) { left: -4px; bottom: -4px; }
.selection i:nth-child(4) { right: -4px; bottom: -4px; }

/* modal screen */
.modal {
  height: 200px;
  background: #7f7f7f;
  color: #1a1a1a;
}
.sheet {
  width: 468px;
  margin-left: auto;
  background: #fcfcfc;
}
.sheet-head {
  display: flex;
  align-items: center;
  height: 38px;
  padding: 0 189px 0 11.500px;
  border-bottom: 1px solid #eaeaea;
}
.bot-box {
  width: 19px;
  height: 19px;
  margin-right: 5px;
  border-radius: 4px;
  background: #dbe8fd;
  color: #3b82f6;
  display: flex;
  align-items: center;
  justify-content: center;
}
.bot-box .icon {
  width: 9px;
  height: 9px;
}
.sheet-head h2 {
  font-size: 8.400px;
  line-height: 11px;
  font-weight: 600;
}
.run {
  display: flex;
  align-items: center;
  gap: 4px;
  font-size: 5.600px;
  color: #777;
}
.run .status {
  margin: 0;
  height: 8px;
  font-size: 5.500px;
}
.close {
  width: 18px;
  height: 18px;
  margin-left: auto;
  border: 1px solid #eee;
  border-radius: 3px;
  display: flex;
  align-items: center;
  justify-content: center;
}
.close .icon {
  width: 6.500px;
  height: 6.500px;
  stroke-width: 3;
}
.sheet-body {
  padding: 11px 11.500px 0;
}
.sheet-body h3 {
  display: flex;
  align-items: center;
  gap: 4px;
  font-size: 7px;
  line-height: 9px;
  font-weight: 600;
}
.sheet-body h3 .icon {
  width: 7px;
  height: 7px;
  color: #e0459a;
}
.sheet-body p {
  margin-top: 5.500px;
  font-size: 6.070px;
  line-height: 9.500px;
  color: #777;
  white-space: nowrap;
}
.branch-bar {
  display: flex;
  align-items: center;
  height: 22px;
  margin-top: 11px;
  padding-left: 7px;
  border-radius: 4px;
  background: #f5f5f5;
  font-size: 5.700px;
}
.branch-bar .icon {
  width: 7px;
  height: 7px;
  margin-right: 2.500px;
}
.branch-bar code {
  margin-right: 7.500px;
  font-size: 5.600px;
}
.behind {
  margin-right: 7px;
}
.stats {
  display: flex;
  gap: 7.500px;
  margin-top: 11px;
}
.stats div {
  width: 61px;
  height: 45px;
  padding-top: 9px;
  border-radius: 4px;
  background: #f5f5f5;
  text-align: center;
  font-size: 5.300px;
  line-height: 6px;
  color: #777;
}
.stats b {
  display: block;
  font-size: 11.200px;
  line-height: 14px;
  margin-bottom: 2px;
  font-weight: 600;
}
.stats div:first-child b {
  color: #1a1a1a;
}

/* chat */
.chat {
  position: absolute;
  left: 545px;
  top: 321px;
  width: 238px;
  height: 379px;
  border: 1px solid #3a3a3d;
  border-radius: 10px;
  overflow: hidden;
  background: #19191b;
  display: flex;
  flex-direction: column;
  z-index: 2;
}
.chat-tabs {
  display: flex;
  align-items: center;
  height: 23px;
  flex: none;
  padding: 0 8px 0 7px;
  background: #232325;
  border-bottom: 1px solid #333336;
  font-size: 9.550px;
  font-weight: 600;
  white-space: nowrap;
}
.chat-tabs .icon {
  width: 8px;
  height: 8px;
  color: #777;
}
.chat-tabs span {
  margin-left: 7px;
  color: #6b6b6e;
}
.chat-tabs b {
  margin: 0 6px 0 auto;
  font-weight: 600;
  color: #b4b4b6;
}
.chat-log {
  height: 198px;
  flex: none;
  overflow: hidden;
  padding: 0 9px;
  background: #262628;
  border-bottom: 1px solid #333336;
  font-size: 9.480px;
  line-height: 11.800px;
  color: #c4c4c6;
  white-space: nowrap;
}
.chat-log h4 {
  margin-top: 6.400px;
  font-size: 9.550px;
  font-weight: 700;
}
.chat-log h4:first-child {
  margin-top: -2.200px;
}
.chat-log ul {
  padding-left: 13px;
}
.chat-log li {
  margin-top: 3.200px;
}
.chat-log li::before {
  content: "•";
  display: inline-block;
  width: 9px;
  margin-left: -9px;
}
.chat-log i {
  font-size: 8px;
  line-height: 8px;
}
.todo {
  height: 87px;
  flex: none;
  padding: 6.500px 9px 0 7px;
  background: #1f1f21;
  border-bottom: 1px solid #2c2c2e;
  font-size: 7.900px;
  color: #707072;
}
.todo div {
  display: flex;
  align-items: center;
  height: 11.400px;
}
.todo .icon {
  width: 9.500px;
  height: 9.500px;
  margin-right: 4.500px;
}
.todo .todo-item .icon {
  color: #4fb36a;
}
.todo .todo-head {
  height: 13px;
  margin-bottom: 3px;
  font-size: 8.200px;
  color: #808082;
}
.todo-head span {
  margin: 0 6px 0 auto;
}
.todo .todo-head .icon:last-child {
  width: 8px;
  height: 8px;
  margin-right: 0;
}
.prompt {
  flex: 1;
  display: flex;
  flex-direction: column;
  justify-content: space-between;
  padding: 7px 6px 5px 7.500px;
}
.placeholder {
  font-size: 10.300px;
  line-height: 13px;
  color: #77777a;
}
.prompt-bar {
  display: flex;
  align-items: center;
  font-size: 8.700px;
  color: #a0a0a2;
}
.prompt-bar .icon {
  margin-right: 9px;
  color: #858587;
}
.prompt-bar .caret {
  width: 7px;
  height: 7px;
  margin: 0 13px 0 9px;
}
.count {
  font-size: 8px;
}
.send {
  width: 16px;
  height: 16px;
  margin-left: auto;
  border-radius: 50%;
  background: #4d4d50;
  display: flex;
  align-items: center;
  justify-content: center;
}
.prompt-bar .send .icon {
  width: 9px;
  height: 9px;
  margin: 0;
  color: #222;
}

/* properties */
.props {
  width: 167px;
  flex: none;
  background: #131313;
  border-left: 1px solid #232323;
  overflow: hidden;
  color: #a6a6a6;
}
.props section {
  border-bottom: 1px solid #222;
  padding: 0 8.500px 0 7.500px;
}
.props h5 {
  display: flex;
  align-items: center;
  height: 14px;
  font-size: 8.850px;
  font-weight: 500;
  color: #8b8b8b;
}
.props h6 {
  display: flex;
  align-items: center;
  height: 11px;
  font-size: 7.300px;
  font-weight: 500;
  color: #8b8b8b;
}
.props h5 .push {
  width: 9px;
  height: 9px;
  margin-right: 4px;
  stroke-width: 1.700;
}
.props .s-name, .props .s-context {
  display: flex;
  align-items: center;
  height: 32px;
  padding-left: 10px;
}
.props .s-name {
  padding-right: 10px;
}
.s-name .icon {
  width: 12px;
  height: 12px;
  stroke-width: 1.600;
  color: #8f8f8f;
}
.s-name b {
  margin-left: 3px;
  font-weight: 500;
  font-size: 9px;
  color: #bbb;
}
.s-name .push {
  margin-right: 7px;
}
.props .s-context {
  padding-left: 9px;
  font-size: 8.850px;
  font-weight: 500;
  color: #929292;
}
.s-context .push {
  width: 8px;
  height: 8px;
  margin: 3px 4px 0 auto;
  color: #b5b5b5;
  stroke-width: 3;
}
.props .s-align {
  height: 51px;
  padding-top: 8px;
}
.align-row {
  display: flex;
  justify-content: space-between;
  padding: 6px 2px 0 3px;
  color: #505050;
}
.props .s-position {
  height: 77.500px;
  padding-top: 7px;
}
.pair {
  display: grid;
  grid-template-columns: 73px 73px;
  gap: 4.500px 4.500px;
}
.field {
  display: flex;
  align-items: center;
  height: 19px;
  padding-left: 6px;
  border-radius: 4px;
  background: #232325;
  font: 8.600px "DejaVu Sans Mono", monospace;
  color: #c2c2c2;
}
.field i {
  margin-right: 3px;
  font-family: Inter, sans-serif;
  color: #77777a;
}
.field .icon {
  width: 9px;
  height: 9px;
  margin-right: 5px;
  color: #747477;
}
.s-position .pair {
  margin-top: 4.500px;
}
.props .s-flex {
  height: 263px;
  padding-top: 6.500px;
}
.s-flex h5 .push, .s-flex h6 .push {
  width: 11px;
  height: 11px;
  margin-right: 1px;
}
.segments {
  display: flex;
  height: 17px;
  margin-top: 4px;
  border-radius: 4px;
  background: #232325;
}
.segments span {
  flex: 1;
  display: flex;
  align-items: center;
  justify-content: center;
  border-radius: 4px;
}
.segments span.on {
  flex: 0 0 48px;
  background: #4a4951;
}
.labels {
  margin: 6.500px 0 3.500px;
}
.nine {
  display: grid;
  grid-template-columns: repeat(3, 1fr);
  height: 53px;
  border-radius: 3px;
  background: #3d3d43;
  place-items: center;
}
.nine i {
  width: 1.500px;
  height: 1.500px;
  background: #ddd;
}
.nine .on {
  width: 6.500px;
  height: 6.500px;
  border-radius: 1px;
  background: #5b94f0;
}
.gaps div {
  display: flex;
  align-items: center;
  height: 19px;
  font-size: 7.150px;
  font-weight: 500;
  white-space: nowrap;
}
.gaps .field {
  width: 59.500px;
  margin-left: 3px;
}
.radio {
  width: 10px;
  height: 10px;
  flex: none;
  margin-right: 3px;
  border-radius: 50%;
  background: #fff;
}
.radio.on {
  margin-right: 0;
  border: 2px solid #fff;
  outline: 1px solid #3b7cf0;
  outline-offset: -1px;
  background: #2f6fe8;
}
.props .padding-label {
  margin: 5.500px 0 3px;
  height: 13px;
}
.props .dim-label {
  margin: 6px 0 3px;
}
.props .checks {
  margin-top: 6px;
  gap: 5.300px 4.500px;
}
.checks div {
  display: flex;
  align-items: center;
  font-size: 7.250px;
  font-weight: 500;
  height: 13px;
}
.box {
  width: 12.500px;
  height: 12.500px;
  margin-right: 3.500px;
  border: 1px solid #333336;
  border-radius: 3px;
  background: #19191b;
  display: flex;
  align-items: center;
  justify-content: center;
}
.box.on {
  background: #858587;
  border-color: #858587;
  color: #151515;
}
.box .icon {
  width: 9px;
  height: 9px;
  stroke-width: 2.500;
}
.props .s-appearance {
  height: 54px;
  padding-top: 7px;
}
.line {
  display: flex;
  align-items: center;
  margin-top: 4.500px;
}
.w62 {
  width: 62px;
  margin-right: 4.500px;
}
.end {
  margin-left: auto;
  margin-right: 3px;
}
.props .s-fill {
  height: 57px;
  padding-top: 9px;
}
.s-fill .line, .s-stroke h5 + .line {
  margin-top: 6px;
}
.paint {
  width: 113.500px;
  padding: 0 3px;
  border: 1px solid #3a3a3d;
}
.swatch {
  width: 12px;
  height: 12px;
  margin-right: 4px;
  border-radius: 2.500px;
  background: #fff;
}
.swatch.blue {
  background: #4a7fe8;
}
.paint .var {
  margin: 0 2px 0 auto;
  color: #7d3f92;
}
.eye {
  margin-left: 5px;
}
.minus {
  width: 9px;
  height: 9px;
  margin-left: auto;
  margin-right: 5px;
}
.opacity {
  height: 17px;
  margin-left: auto;
  padding-left: 6px;
  border-left: 1px solid #3a3a3d;
  line-height: 17px;
}
.opacity i {
  margin-right: 2px;
}
.props .s-stroke {
  height: 81.500px;
  padding-top: 9px;
}
.select {
  display: flex;
  align-items: center;
  justify-content: space-between;
  width: 62px;
  height: 19px;
  margin-right: 4.500px;
  padding: 0 6px;
  border: 1px solid #343436;
  border-radius: 4px;
  font-size: 8.800px;
  font-weight: 500;
  color: #c2c2c2;
}
.select .icon {
  width: 8px;
  height: 8px;
}
.props .s-effects {
  height: 33.500px;
  padding-top: 9px;
}
.props .s-theme {
  padding-top: 9.500px;
  border: 0;
}
```
